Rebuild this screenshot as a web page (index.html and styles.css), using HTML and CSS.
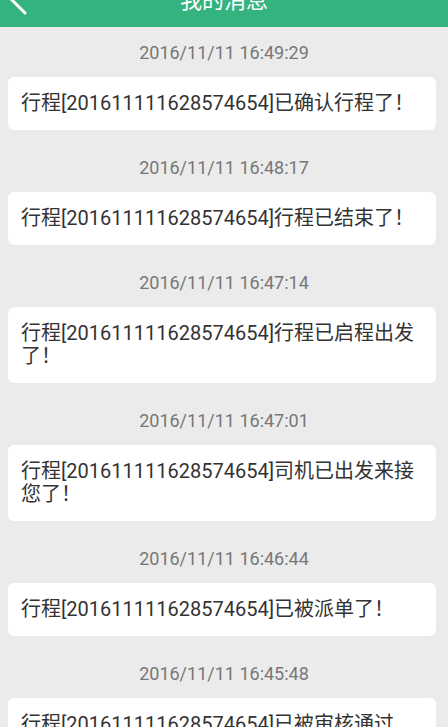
FILE: index.html
```html
<!DOCTYPE html>
<html lang="zh-CN">
<head>
  <meta charset="UTF-8">
  <title>我的消息</title>
  <link rel="stylesheet" href="styles.css">
</head>
<body>
  <div class="topbar">
    <a class="back" href="#">
      <svg width="40" height="52" viewBox="0 0 40 52">
        <path d="M25 4 L8 21 L25 38" fill="none" stroke="#fff" stroke-width="3" stroke-linecap="round" stroke-linejoin="round"/>
      </svg>
    </a>
    <h1 class="title">我的消息</h1>
    <span></span>
  </div>

  <div class="list">
    <div class="msg">
      <p class="time">2016/11/11 16:49:29</p>
      <div class="card">行程[201611111628574654]已确认行程了！</div>
    </div>
    <div class="msg">
      <p class="time">2016/11/11 16:48:17</p>
      <div class="card">行程[201611111628574654]行程已结束了！</div>
    </div>
    <div class="msg">
      <p class="time">2016/11/11 16:47:14</p>
      <div class="card">行程[201611111628574654]行程已启程出发了！</div>
    </div>
    <div class="msg">
      <p class="time">2016/11/11 16:47:01</p>
      <div class="card">行程[201611111628574654]司机已出发来接您了！</div>
    </div>
    <div class="msg">
      <p class="time">2016/11/11 16:46:44</p>
      <div class="card">行程[201611111628574654]已被派单了！</div>
    </div>
    <div class="msg">
      <p class="time">2016/11/11 16:45:48</p>
      <div class="card">行程[201611111628574654]已被审核通过了！</div>
    </div>
  </div>
</body>
</html>
```

FILE: styles.css
```css
body {
  margin: 0;
  background-color: #ebebeb;
  font-family: Roboto, "Noto Sans CJK SC", sans-serif;
  overflow: hidden;
}
.topbar {
  display: grid;
  grid-template-columns: 48px 1fr 48px;
  align-items: center;
  height: 52px;
  margin-top: -25px;
  background-color: #35b37f;
}
.back {
  display: block;
  height: 52px;
}
.back svg {
  display: block;
}
.title {
  margin: 0;
  text-align: center;
  color: #fff;
  font-size: 22px;
  font-weight: normal;
  line-height: 52px;
}
.list {
  padding-top: 16px;
}
.msg {
  margin-bottom: 12px;
}
.msg + .msg {
  padding-top: 16px;
}
.time {
  margin: 0 0 14px;
  text-align: center;
  color: #777;
  font-size: 18px;
  line-height: 20px;
}
.card {
  margin: 0 12px 0 8px;
  padding: 15px 13px;
  background-color: #fff;
  border-radius: 6px;
  color: #333;
  font-size: 20px;
  line-height: 23px;
}
```
